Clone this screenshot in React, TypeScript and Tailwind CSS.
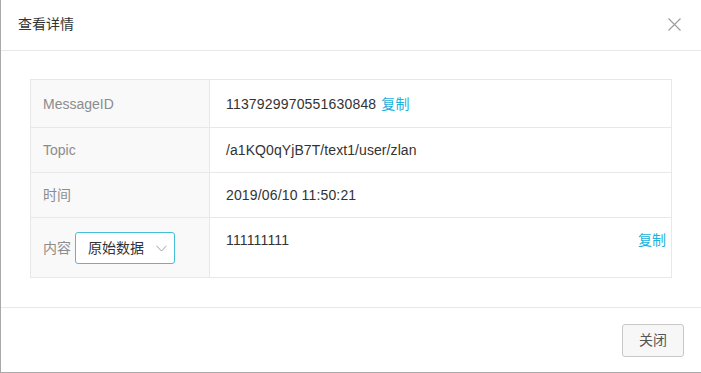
import React from "react";

const font = { fontFamily: '"Liberation Sans", Arial, "Noto Sans CJK SC", sans-serif' };

export default function App() {
  return (
    <div
      className="w-[701px] h-[373px] bg-white border-l border-b border-[#a9a9a9] flex flex-col overflow-hidden text-[14px] text-[#333]"
      style={font}
    >
      <div className="h-[51px] shrink-0 border-b border-[#e8e8e8] flex items-center justify-between pl-[17px] pr-[20px]">
        <span className="text-[14px] text-[#333] leading-5 pb-[2px]">查看详情</span>
        <svg width="13" height="13" viewBox="0 0 13 13" className="mb-[2px]">
          <path d="M0.5 0.5 L12.5 12.5 M12.5 0.5 L0.5 12.5" stroke="#9a9a9a" strokeWidth="1.1" fill="none" />
        </svg>
      </div>

      <div className="flex-1 pt-[28px] pb-[28px] pl-[29px] pr-[29px]">
        <div className="border border-[#e8e8e8] flex flex-col">
          <div className="flex h-[48px] border-b border-[#e8e8e8]">
            <div className="w-[179px] shrink-0 bg-[#f9f9f9] border-r border-[#e8e8e8] pl-[12px] flex items-center text-[#8c8c8c] leading-5">
              MessageID
            </div>
            <div className="flex-1 pl-[16px] flex items-center leading-5 tracking-[0.18px]">
              <span>1137929970551630848</span>
              <span className="ml-[5px] text-[#1ab1dc]">复制</span>
            </div>
          </div>
          <div className="flex h-[45px] border-b border-[#e8e8e8]">
            <div className="w-[179px] shrink-0 bg-[#f9f9f9] border-r border-[#e8e8e8] pl-[12px] flex items-center text-[#8c8c8c] leading-5">
              Topic
            </div>
            <div className="flex-1 pl-[16px] flex items-center leading-5 tracking-[0.08px]">/a1KQ0qYjB7T/text1/user/zlan</div>
          </div>
          <div className="flex h-[45px] border-b border-[#e8e8e8]">
            <div className="w-[179px] shrink-0 bg-[#f9f9f9] border-r border-[#e8e8e8] pl-[12px] flex items-center text-[#8c8c8c] leading-5">
              时间
            </div>
            <div className="flex-1 pl-[16px] flex items-center leading-5 tracking-[0.15px]">2019/06/10 11:50:21</div>
          </div>
          <div className="flex h-[59px]">
            <div className="w-[179px] shrink-0 bg-[#f9f9f9] border-r border-[#e8e8e8] pl-[12px] flex items-center gap-[4px] text-[#8c8c8c] leading-5">
              <span>内容</span>
              <div className="w-[100px] h-[32px] border border-[#45c0d9] rounded-[3px] bg-white flex items-center justify-between pl-[12px] pr-[7px] text-[#333]">
                <span>原始数据</span>
                <svg width="11" height="7" viewBox="0 0 11 7" className="mt-[1px]">
                  <path d="M0.5 0.8 L5.5 6 L10.5 0.8" stroke="#a0a0a0" strokeWidth="1" fill="none" />
                </svg>
              </div>
            </div>
            <div className="flex-1 pl-[16px] pr-[5px] pt-[12px] flex items-start justify-between leading-5">
              <span className="tracking-[0.15px]">111111111</span>
              <span className="text-[#1ab1dc]">复制</span>
            </div>
          </div>
        </div>
      </div>

      <div className="h-[65px] shrink-0 border-t border-[#e8e8e8] flex items-center justify-end pr-[17px]">
        <button className="w-[62px] h-[33px] border border-[#c8c8c8] rounded-[3px] bg-[#f7f7f7] text-[#555] text-[14px] flex items-center justify-center">
          关闭
        </button>
      </div>
    </div>
  );
}
